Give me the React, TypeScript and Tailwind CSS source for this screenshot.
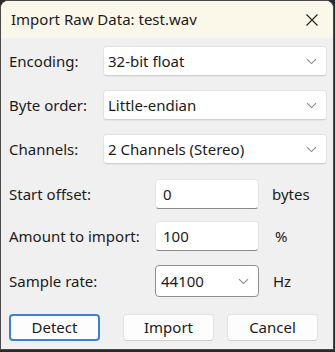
import React from "react";

const font = { fontFamily: '"Noto Sans", "Open Sans", sans-serif' };

function Chevron() {
  return (
    <svg width="11" height="7" viewBox="0 0 11 7" className="shrink-0">
      <path d="M1 1.2 L5.5 5.6 L10 1.2" fill="none" stroke="#8a8a8a" strokeWidth="1.1" />
    </svg>
  );
}

function Combo({ value }: { value: string }) {
  return (
    <div className="flex h-[30px] w-[224px] items-center justify-between rounded-[4px] border border-[#e3e3e3] border-b-[#cfcfcf] bg-white pl-[4px] pr-[9px] shadow-[0_1px_0_rgba(0,0,0,0.04)]">
      <span>{value}</span>
      <Chevron />
    </div>
  );
}

function Field({ value }: { value: string }) {
  return (
    <div className="flex h-[30px] w-[104px] items-center rounded-[4px] border border-[#e5e5e5] border-b-[#8a8a8a] bg-white pl-[7px]">
      {value}
    </div>
  );
}

function Button({ label, primary }: { label: string; primary?: boolean }) {
  return (
    <button
      className={`flex h-[27px] w-[91px] items-center justify-center rounded-[4px] bg-[#fdfdfd] ${
        primary ? "border-2 border-[#3b82d4]" : "border border-[#e2e2e2] border-b-[#cccccc]"
      }`}
    >
      {label}
    </button>
  );
}

export default function App() {
  return (
    <div className="h-[352px] w-[335px] bg-[#2a2a2a] text-[15px] leading-none text-[#1b1b1b]" style={font}>
      <div className="flex h-[350px] w-[334px] flex-col overflow-hidden rounded-t-[8px] border border-[#4a4a4a] bg-[#f0f0f0]">
        <div className="flex h-[37px] shrink-0 items-center justify-between bg-[#fbf7e9] pl-[10px] pr-[14px]">
          <span className="text-[15px]">Import Raw Data: test.wav</span>
          <svg width="14" height="14" viewBox="0 0 14 14">
            <path d="M1.5 1.5 L12.5 12.5 M12.5 1.5 L1.5 12.5" stroke="#222" strokeWidth="1.1" />
          </svg>
        </div>

        <div className="flex flex-col pl-[8px]">
          <div className="mt-[8px] flex items-center">
            <span className="w-[94px]">Encoding:</span>
            <Combo value="32-bit float" />
          </div>
          <div className="mt-[14px] flex items-center">
            <span className="w-[94px]">Byte order:</span>
            <Combo value="Little-endian" />
          </div>
          <div className="mt-[14px] flex items-center">
            <span className="w-[94px]">Channels:</span>
            <Combo value="2 Channels (Stereo)" />
          </div>

          <div className="mt-[15px] flex items-center">
            <span className="w-[146px]">Start offset:</span>
            <Field value="0" />
            <span className="ml-[13px]">bytes</span>
          </div>
          <div className="mt-[12px] flex items-center">
            <span className="w-[146px]">Amount to import:</span>
            <Field value="100" />
            <span className="ml-[16px]">%</span>
          </div>
          <div className="mt-[14px] flex items-center">
            <span className="w-[146px]">Sample rate:</span>
            <div className="flex h-[32px] w-[104px] items-center justify-between rounded-[4px] border border-[#8f8f8f] bg-white pl-[5px] pr-[9px]">
              <span>44100</span>
              <Chevron />
            </div>
            <span className="ml-[14px]">Hz</span>
          </div>

          <div className="mt-[17px] flex items-center">
            <Button label="Detect" primary />
            <div className="ml-[23px]">
              <Button label="Import" />
            </div>
            <div className="ml-[13px]">
              <Button label="Cancel" />
            </div>
          </div>
        </div>
      </div>
    </div>
  );
}
